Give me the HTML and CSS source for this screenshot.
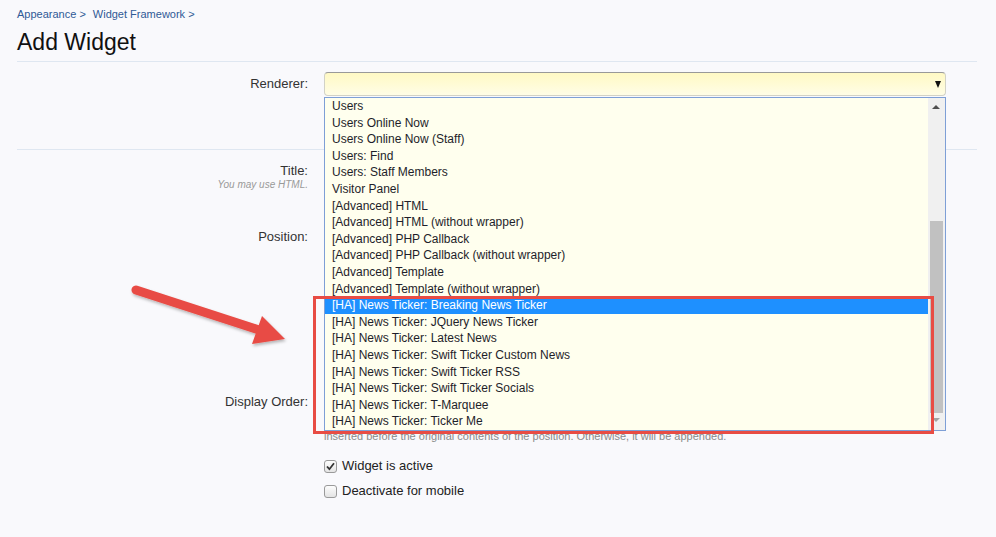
FILE: index.html
```html
<!DOCTYPE html>
<html>
<head>
<meta charset="utf-8">
<link rel="stylesheet" href="styles.css">
</head>
<body>
<div class="page">
  <nav class="crumbs"><a>Appearance &gt;</a><a>Widget Framework &gt;</a></nav>
  <h1 class="title">Add Widget</h1>

  <form class="form">
    <div class="section section-first">
      <div class="row row-renderer">
        <label class="label">Renderer:</label>
        <div class="control">
          <div class="select"><span class="select-arrow"></span></div>
        </div>
      </div>
    </div>

    <div class="section">
      <div class="row row-title">
        <div class="label">Title:<span class="hint">You may use HTML.</span></div>
        <div class="control"></div>
      </div>
      <div class="row row-position">
        <div class="label">Position:</div>
        <div class="control"></div>
      </div>
      <div class="row row-order">
        <div class="label">Display Order:</div>
        <div class="control"></div>
      </div>
      <div class="row row-help">
        <div class="label"></div>
        <div class="control help">inserted before the original contents of the position. Otherwise, it will be appended.</div>
      </div>
      <div class="row row-check">
        <div class="label"></div>
        <div class="control"><span class="check checked"><svg viewBox="0 0 13 13" width="13" height="13"><path d="M3 6.5 L5.4 9.2 L10 3.2" fill="none" stroke="#333" stroke-width="1.8"/></svg></span>Widget is active</div>
      </div>
      <div class="row row-check2">
        <div class="label"></div>
        <div class="control"><span class="check"></span>Deactivate for mobile</div>
      </div>
    </div>
  </form>

  <div class="dropdown">
    <ul class="options">
      <li>Users</li>
      <li>Users Online Now</li>
      <li>Users Online Now (Staff)</li>
      <li>Users: Find</li>
      <li>Users: Staff Members</li>
      <li>Visitor Panel</li>
      <li>[Advanced] HTML</li>
      <li>[Advanced] HTML (without wrapper)</li>
      <li>[Advanced] PHP Callback</li>
      <li>[Advanced] PHP Callback (without wrapper)</li>
      <li>[Advanced] Template</li>
      <li>[Advanced] Template (without wrapper)</li>
      <li class="selected">[HA] News Ticker: Breaking News Ticker</li>
      <li>[HA] News Ticker: JQuery News Ticker</li>
      <li>[HA] News Ticker: Latest News</li>
      <li>[HA] News Ticker: Swift Ticker Custom News</li>
      <li>[HA] News Ticker: Swift Ticker RSS</li>
      <li>[HA] News Ticker: Swift Ticker Socials</li>
      <li>[HA] News Ticker: T-Marquee</li>
      <li>[HA] News Ticker: Ticker Me</li>
    </ul>
    <div class="scrollbar">
      <span class="sb-up"></span>
      <span class="sb-thumb"></span>
      <span class="sb-down"></span>
    </div>
  </div>

  <div class="highlight-box"></div>

  <svg class="arrow" width="170" height="70" viewBox="0 0 170 70">
    <defs>
      <filter id="sh" x="-20%" y="-40%" width="140%" height="180%">
        <feDropShadow dx="1" dy="2" stdDeviation="1.5" flood-color="#000" flood-opacity="0.28"/>
      </filter>
    </defs>
    <g filter="url(#sh)" transform="translate(-120 -275)">
      <line x1="136" y1="290" x2="259" y2="330" stroke="#e84c44" stroke-width="9" stroke-linecap="round"/>
      <polygon points="262,316 285,339 252,344" fill="#e84c44"/>
    </g>
  </svg>
</div>
</body>
</html>
```

FILE: styles.css
```css
* { box-sizing: border-box; }

html, body {
  margin: 0;
  padding: 0;
  background: #f9f9fc;
}

body {
  font-family: "Liberation Sans", Arial, sans-serif;
  color: #222;
  width: 996px;
  height: 537px;
  overflow: hidden;
}

.page {
  position: relative;
  padding: 6px 19px 0 17px;
  height: 537px;
}

.crumbs {
  display: flex;
  gap: 7px;
  font-size: 11px;
  line-height: 16px;
  height: 16px;
}

.crumbs a {
  color: #2f5a96;
  text-decoration: none;
}

.title {
  margin: 6px 0 0;
  font-size: 23px;
  line-height: 28px;
  font-weight: normal;
  color: #111;
  padding-bottom: 5px;
  border-bottom: 1px solid #dfe7f1;
}

.form {
  margin: 0;
}

.section {
  border-bottom: 1px solid #dfe7f1;
}

.section:last-child {
  border-bottom: none;
}

.section-first {
  padding-top: 10px;
  height: 88px;
}

.row {
  display: grid;
  grid-template-columns: 291px 1fr;
  column-gap: 16px;
}

.label {
  text-align: right;
  font-size: 13px;
  color: #333;
  line-height: 16px;
}

.row-renderer .label {
  line-height: 24px;
}

.select {
  position: relative;
  height: 24px;
  width: 622px;
  border: 1px solid #d2d2c6;
  border-top-color: #999;
  border-radius: 4px;
  background: linear-gradient(#fff9c4, #fffde6);
}

.select-arrow {
  position: absolute;
  right: 4px;
  top: 8px;
  width: 0;
  height: 0;
  border-left: 3.5px solid transparent;
  border-right: 3.5px solid transparent;
  border-top: 7px solid #111;
}

.row-title {
  padding-top: 13px;
}

.hint {
  display: block;
  font-size: 10px;
  line-height: 14px;
  font-style: italic;
  color: #999;
  margin-top: -1px;
}

.row-position {
  margin-top: 37px;
}

.row-order {
  margin-top: 149px;
}

.row-help {
  margin-top: 19px;
}

.help {
  font-size: 11px;
  line-height: 14px;
  color: #8a8a8a;
}

.row-check,
.row-check2 {
  font-size: 13px;
  line-height: 18px;
}

.row-check {
  margin-top: 14px;
}

.row-check2 {
  margin-top: 7px;
}

.row-check .control,
.row-check2 .control {
  display: flex;
  align-items: center;
  gap: 5px;
  color: #222;
}

.check {
  display: inline-block;
  width: 13px;
  height: 13px;
  border: 1px solid #9a9a9a;
  border-radius: 3px;
  background: linear-gradient(#fdfdfd, #e4e4e4);
  position: relative;
  flex: none;
}

.check svg {
  position: absolute;
  left: -1px;
  top: -1px;
}

/* dropdown overlay */
.dropdown {
  position: absolute;
  left: 324px;
  top: 97px;
  width: 622px;
  height: 334px;
  border: 1px solid #7e9fd6;
  background: #ffffee;
  display: flex;
}

.options {
  list-style: none;
  margin: 0;
  padding: 0;
  flex: 1;
  font-size: 12px;
  color: #1e1e2a;
}

.options li {
  height: 16.6px;
  line-height: 16.6px;
  padding-left: 7px;
  white-space: nowrap;
}

.options li.selected {
  background: #1e90ff;
  color: #fff;
}

.scrollbar {
  position: relative;
  width: 17px;
  flex: none;
  background: #f0f0f0;
}

.sb-up {
  position: absolute;
  left: 4px;
  top: 7px;
  border-left: 4px solid transparent;
  border-right: 4px solid transparent;
  border-bottom: 4px solid #505050;
}

.sb-down {
  position: absolute;
  left: 4px;
  bottom: 8px;
  border-left: 4px solid transparent;
  border-right: 4px solid transparent;
  border-top: 4px solid #a3a3a3;
}

.sb-thumb {
  position: absolute;
  left: 2px;
  right: 2px;
  top: 123px;
  height: 192px;
  background: #c1c1c1;
}

.highlight-box {
  position: absolute;
  left: 313px;
  top: 296px;
  width: 621px;
  height: 138px;
  border: 3px solid #e84c44;
}

.arrow {
  position: absolute;
  left: 120px;
  top: 275px;
  overflow: visible;
}
```
